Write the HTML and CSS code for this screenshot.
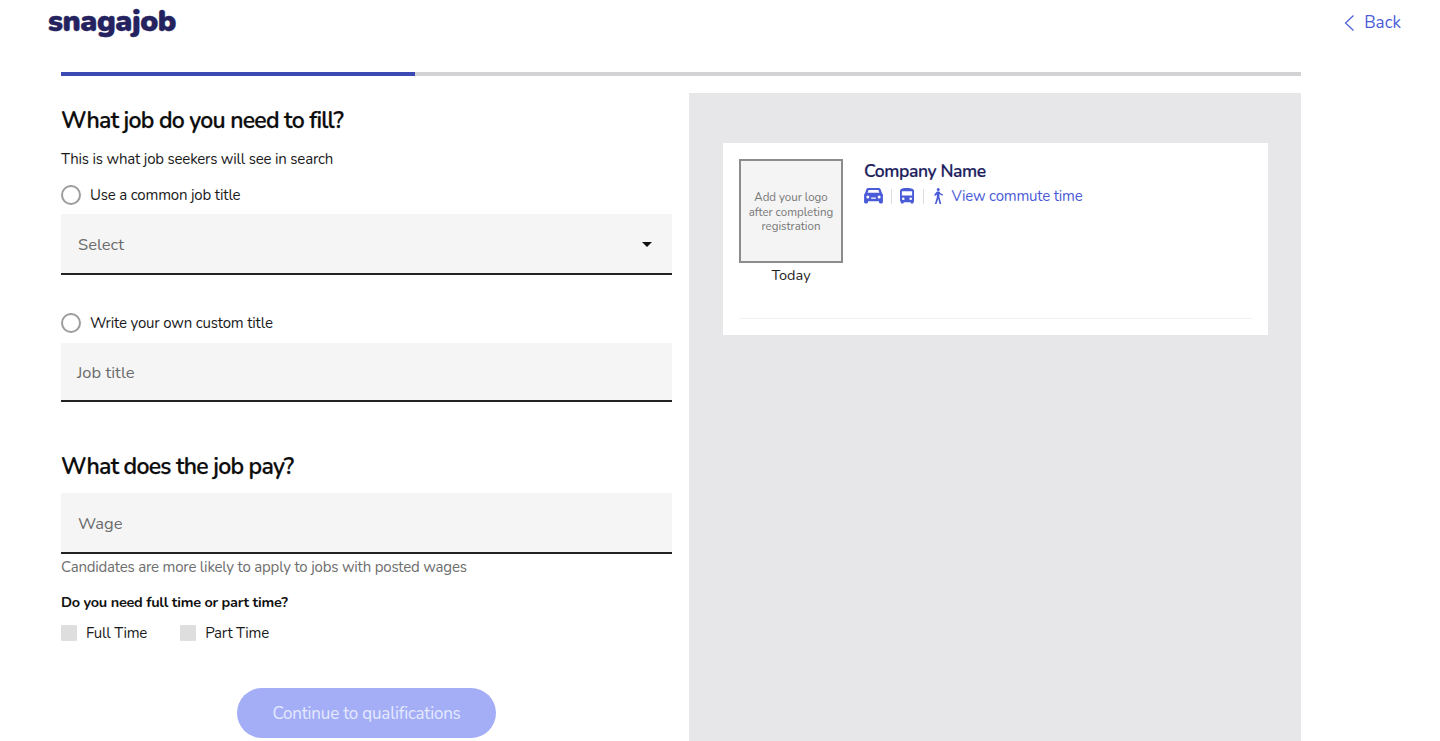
FILE: index.html
```html
<!DOCTYPE html>
<html lang="en">
<head>
<meta charset="utf-8">
<title>Snagajob</title>
<link rel="stylesheet" href="styles.css">
</head>
<body>
<div class="page">
  <header class="top">
    <div class="logo">snagajob</div>
    <a class="back" href="#">
      <svg class="back-icon" viewBox="0 0 12 18" width="12" height="18"><path d="M10.500 1.500 2.500 9l8 7.500" fill="none" stroke="#4a5bd8" stroke-width="1.200"/></svg>
      <span>Back</span>
    </a>
  </header>
  <div class="progress"><div class="progress-fill"></div></div>
  <main class="columns">
    <section class="form">
      <h2 class="heading first">What job do you need to fill?</h2>
      <p class="sub">This is what job seekers will see in search</p>
      <label class="radio-row"><span class="radio"></span><span>Use a common job title</span></label>
      <div class="field select"><span>Select</span><span class="caret"></span></div>
      <label class="radio-row second"><span class="radio"></span><span>Write your own custom title</span></label>
      <div class="field short"><span>Job title</span></div>
      <h2 class="heading pay">What does the job pay?</h2>
      <div class="field wage"><span>Wage</span></div>
      <p class="hint">Candidates are more likely to apply to jobs with posted wages</p>
      <p class="question">Do you need full time or part time?</p>
      <div class="checks">
        <label class="check"><span class="box"></span><span>Full Time</span></label>
        <label class="check"><span class="box"></span><span>Part Time</span></label>
      </div>
      <div class="actions"><button class="continue" type="button">Continue to qualifications</button></div>
    </section>
    <aside class="preview">
      <div class="card">
        <div class="card-row">
          <div class="logo-col">
            <div class="logo-box">Add your logo after completing registration</div>
            <div class="today">Today</div>
          </div>
          <div class="info">
            <div class="company">Company Name</div>
            <div class="commute">
              <svg class="ic-car" viewBox="0 0 20 17" width="19" height="16"><path fill="#4a5bd8" fill-rule="evenodd" d="M4.500 0h11c1 0 1.800.6 2.100 1.500L19 5.500c.7.5 1 1.200 1 2V15c0 .8-.6 1.400-1.400 1.400h-1.400c-.8 0-1.400-.6-1.400-1.400v-.8H4.200v.8c0 .8-.6 1.400-1.400 1.400H1.400C.6 16.400 0 15.800 0 15V7.500c0-.8.300-1.500 1-2l1.400-4C2.700.6 3.500 0 4.500 0zM4.800 2 3.700 5h12.600l-1.100-3H4.800zM4 8a1.600 1.600 0 1 0 0 3.200A1.600 1.600 0 0 0 4 8zm12 0a1.600 1.600 0 1 0 0 3.200A1.600 1.600 0 0 0 16 8zM7.500 10v1.500h5V10h-5z"/></svg>
              <span class="sep sep-a"></span>
              <svg class="ic-bus" viewBox="0 0 15 17" width="14" height="16"><path fill="#4a5bd8" fill-rule="evenodd" d="M7.500 0C3.500 0 0 .5 0 3.500V13c0 .8.300 1.400.9 1.800v1c0 .4.300.7.700.7h1.700c.4 0 .7-.3.700-.7v-.6h7.400v.6c0 .4.300.7.700.7h1.700c.4 0 .7-.3.700-.7v-1c.6-.4.900-1 .9-1.800V3.500C15 .5 11.500 0 7.500 0zM2 3.500h11V8H2V3.500zM3.500 10a1.400 1.400 0 1 0 0 2.800 1.400 1.400 0 0 0 0-2.800zm8 0a1.400 1.400 0 1 0 0 2.800 1.400 1.400 0 0 0 0-2.800z"/></svg>
              <span class="sep sep-b"></span>
              <svg class="ic-walk" viewBox="0 0 14 18" width="12.500" height="16"><path fill="#4a5bd8" d="M7 0a1.700 1.700 0 1 1 0 3.400A1.700 1.700 0 0 1 7 0zM5.400 3.800h2.900l1.300 2 2.900 1.400-.7 1.400-3.200-1.500-.3-.4v3.500l2.400 8.800H8.800L7 12.200 5 18H3.200l2.200-7.600V7.300L3.400 9l-1.100-1.200z"/></svg>
              <a class="commute-link" href="#">View commute time</a>
            </div>
          </div>
        </div>
        <div class="rule"></div>
      </div>
    </aside>
  </main>
</div>
</body>
</html>
```

FILE: styles.css
```css
* { box-sizing: border-box; }
html, body { margin: 0; height: 741px; overflow: hidden; background: #fff; }
body { font-family: "Nunito", "Lato", "Noto Sans", sans-serif; color: #1a1a1a; }
p { margin: 0; }
.page { padding: 0 39px 0 61px; height: 741px; overflow: hidden; }
.top { height: 72px; width: 1340px; display: flex; justify-content: space-between; align-items: flex-start; }
.logo { margin: 2px 0 0 -13px; font-weight: 900; font-size: 30px; line-height: 40px; letter-spacing: -0.4px; color: #24235f; -webkit-text-stroke: 0.5px #24235f; }
.back { margin-top: 11px; display: flex; align-items: center; gap: 9px; color: #4a5bd8; font-size: 17px; line-height: 24px; text-decoration: none; }
.back-icon { display: block; }
.progress { width: 1240px; height: 4px; background: #d3d3d5; }
.progress-fill { width: 354px; height: 4px; background: #3c49b4; }
.columns { width: 1240px; margin-top: 17px; display: flex; gap: 17px; align-items: stretch; height: 700px; }
.form { width: 611px; flex: none; }
.heading { margin: 0; font-size: 23px; font-weight: 600; line-height: 30px; color: #0c0c0c; letter-spacing: -0.75px; -webkit-text-stroke: 0.25px #0c0c0c; }
.heading.first { padding-top: 13px; }
.sub { margin-top: 13px; font-size: 15px; line-height: 20px; letter-spacing: -0.19px; }
.radio-row { display: flex; align-items: center; gap: 9px; font-size: 15px; line-height: 20px; height: 22px; letter-spacing: -0.18px; margin-top: 15px; }
.radio { width: 20px; height: 20px; border: 2px solid #9c9c9c; border-radius: 50%; flex: none; background: #fff; }
.field { background: #f5f5f5; border-bottom: 2px solid #222; display: flex; align-items: center; justify-content: space-between; padding: 2px 17px 0; font-size: 16.500px; color: #6b6b6b; }
.select { height: 61px; margin-top: 8px; }
.second { margin-top: 37px; }
.short { height: 59px; margin-top: 9px; padding-left: 16px; }
.pay { margin-top: 50px; }
.wage { height: 61px; margin-top: 11px; }
.caret { width: 0; height: 0; border-left: 5.500px solid transparent; border-right: 5.500px solid transparent; border-top: 5.500px solid #111; margin-right: 3px; }
.hint { margin-top: 3px; font-size: 15px; line-height: 20px; color: #6e6e6e; letter-spacing: -0.2px; }
.question { margin-top: 15px; font-size: 14.500px; font-weight: 700; line-height: 20px; color: #111; letter-spacing: -0.26px; }
.checks { display: flex; gap: 33px; margin-top: 11px; }
.check { display: flex; align-items: center; gap: 9px; font-size: 15px; line-height: 20px; letter-spacing: -0.2px; }
.box { width: 16px; height: 16px; background: #dedede; border-radius: 1px; flex: none; }
.actions { display: flex; justify-content: center; margin-top: 45px; }
.continue { width: 259px; height: 50px; border: 0; border-radius: 25px; background: #a3aef7; color: #e6e9fd; font: inherit; font-size: 17px; letter-spacing: -0.2px; }
.preview { width: 612px; flex: none; background: #e7e7e9; padding: 50px 33px 0 34px; }
.card { width: 545px; height: 192px; background: #fff; padding: 16px 16px 0 16px; }
.card-row { display: flex; gap: 21px; height: 159px; }
.logo-col { width: 104px; flex: none; }
.logo-box { width: 104px; height: 104px; border: 2px solid #8c8c8c; background: #f4f4f4; display: flex; align-items: center; justify-content: center; text-align: center; padding: 2px 4px 0; font-size: 11.500px; line-height: 14.500px; color: #767676; }
.today { margin-top: 2px; text-align: center; font-size: 14.500px; line-height: 20px; color: #222; }
.info { flex: 1; }
.company { font-size: 17.500px; font-weight: 600; line-height: 24px; color: #1e1e5e; letter-spacing: -0.4px; -webkit-text-stroke: 0.2px #1e1e5e; }
.commute { display: flex; align-items: center; margin-top: 3px; height: 20px; }
.sep { width: 1px; height: 15px; background: #dcdcdc; }
.sep-a { margin: 0 8px; }
.sep-b { margin: 0 8px 0 9px; }
.ic-walk { margin-right: 7px; }
.commute-link { color: #4a5bd8; font-size: 15px; line-height: 20px; text-decoration: none; letter-spacing: -0.2px; }
.rule { height: 1px; background: #f2f2f2; }
```
